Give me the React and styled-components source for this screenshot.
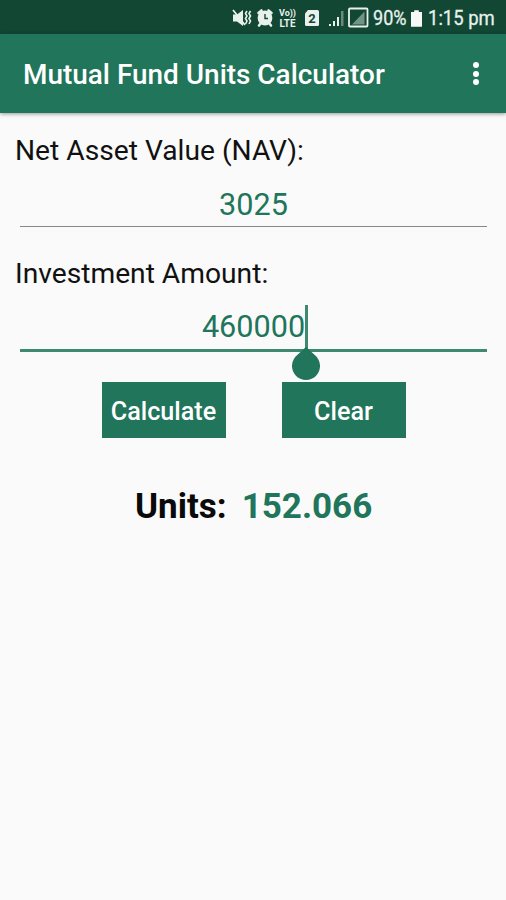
import React from 'react';
import styled, { createGlobalStyle } from 'styled-components';

const GlobalStyle = createGlobalStyle`
    * {
      box-sizing: border-box;
    }
    body {
      margin: 0;
      background: #fafafa;
      font-family: Roboto, sans-serif;
    }
`;

const Screen = styled.div`
    width: 506px;
    height: 900px;
    overflow: hidden;
    background: #fafafa;
`;

const StatusBar = styled.div`
    display: flex;
    align-items: center;
    height: 34px;
    padding: 2px 0 0 232px;
    background: #124734;
    color: #e9f1ee;
`;

const StatusIcons = styled.svg`
    display: block;
    flex: none;
    width: 141px;
    height: 32px;
`;

const StatusText = styled.span`
    flex: none;
    width: ${props => props.$width}px;
    font-size: 21px;
    line-height: 32px;
    white-space: nowrap;
    -webkit-text-stroke: 0.3px #e9f1ee;
    transform: scaleX(${props => props.$scale});
    transform-origin: left center;
`;

const Battery = styled.svg`
    display: block;
    flex: none;
    width: 11px;
    height: 17px;
    margin: 0 6px 0 4px;
`;

const AppBar = styled.header`
    display: flex;
    align-items: center;
    justify-content: space-between;
    height: 79px;
    padding: 2px 24px 0 23px;
    background: #20755a;
    box-shadow: 0 1px 4px rgba(0, 0, 0, 0.4);
`;

const Title = styled.h1`
    margin: 0;
    color: #fff;
    font-size: 27.95px;
    font-weight: 500;
    line-height: 36px;
    white-space: nowrap;
`;

const MenuButton = styled.button`
    display: flex;
    flex-direction: column;
    gap: 2.5px;
    margin-top: -2px;
    padding: 0 3px 0 0;
    border: 0;
    background: none;
`;

const Dot = styled.span`
    width: 6px;
    height: 6px;
    border-radius: 50%;
    background: #fff;
`;

const Form = styled.main`
    padding: 20px 15px 0;
`;

const Label = styled.div`
    height: 36px;
    color: #111;
    font-size: 28.2px;
    line-height: 36px;
    white-space: nowrap;
`;

const Field = styled.div`
    display: flex;
    justify-content: center;
    height: ${props => (props.$focused ? 60 : 58)}px;
    margin: 0 4px 0 5px;
    padding-top: ${props => (props.$focused ? 13 : 14)}px;
    border-bottom: ${props => (props.$focused ? '3px solid #3f8970' : '1.5px solid #888')};
    margin-bottom: ${props => (props.$focused ? 30 : 29)}px;
`;

const Value = styled.span`
    position: relative;
    height: 44px;
    color: #20755a;
    font-size: 30.6px;
    line-height: 44px;
`;

const Caret = styled.span`
    position: absolute;
    top: 0;
    right: -3px;
    width: 3px;
    height: 44px;
    background: #3f8970;
`;

const Handle = styled.svg`
    position: absolute;
    top: 42px;
    right: -15px;
    width: 28px;
    height: 33px;
`;

const Actions = styled.div`
    display: flex;
    gap: 56px;
    padding-left: 86.5px;
`;

const ActionButton = styled.button`
    width: 124px;
    height: 56px;
    padding: 4px 0 0;
    border: 0;
    background: #20755a;
    color: #fff;
    font-family: inherit;
    font-size: 25.2px;
    font-weight: 500;
    line-height: 32px;
`;

const Result = styled.div`
    display: flex;
    gap: 15px;
    padding: 46px 0 0 120px;
    font-size: 35px;
    font-weight: 700;
    line-height: 46px;
    white-space: nowrap;
`;

const ResultLabel = styled.span`
    color: #0a0a0a;
`;

const ResultValue = styled.span`
    color: #20755a;
`;

const SystemIcons = () => (
  <StatusIcons viewBox="232 2 141 32" fill="#e9f1ee">
    {/* muted, vibrating */}
    <path d="M233 14.5h4l6-4.500v16l-6-4.500h-4z" />
    <path d="M233 10l12 15" fill="none" stroke="#e9f1ee" strokeWidth="1.8" />
    <path d="M247 11l-1.500 2.500 1.500 2.500-1.500 2.500 1.500 2.500-1.500 3M250.500 11l-1.500 2.500 1.500 2.500-1.500 2.500 1.500 2.500-1.500 3" fill="none" stroke="#e9f1ee" strokeWidth="1.6" />
    {/* alarm */}
    <circle cx="265" cy="18" r="7.4" />
    <path d="M258.500 13l3-2.500M268.500 10.500l3 2.500M261 23l-2 2.500M269 23l2 2.500" stroke="#e9f1ee" strokeWidth="2.6" strokeLinecap="round" />
    <path d="M265 14v4.500h3" fill="none" stroke="#124734" strokeWidth="1.4" />
    <text x="279" y="16" fontSize="8.5" fontWeight="700" textLength="17" lengthAdjust="spacingAndGlyphs">Vo))</text>
    <text x="279.5" y="26.5" fontSize="10.5" fontWeight="700" textLength="16" lengthAdjust="spacingAndGlyphs">LTE</text>
    {/* second sim card */}
    <path d="M308 10h9.500a1.500 1.500 0 0 1 1.500 1.500v13a1.500 1.500 0 0 1-1.500 1.500h-11a1.500 1.500 0 0 1-1.500-1.500v-11z" />
    <text x="312" y="22.5" fill="#124734" fontSize="13" fontWeight="700" textAnchor="middle">2</text>
    {/* signal strength */}
    <path d="M329 24h2v2h-2zM333 21h2v5h-2zM337 17h2v9h-2z" />
    <path d="M341 11h2.500v15h-2.500z" opacity=".4" />
    <rect x="349" y="8.5" width="18.500" height="18" rx="1" fill="none" stroke="#e9f1ee" strokeWidth="1.8" />
    <path d="M352 24.500L364.500 11.500v13z" opacity=".45" />
  </StatusIcons>
);

const App = () => {
  return (
    <>
      <GlobalStyle />
      <Screen>
        <StatusBar>
          <SystemIcons />
          <StatusText $width={34} $scale={0.86}>90%</StatusText>
          <Battery viewBox="0 0 12 18" fill="#f5f8f7">
            <path d="M3.500 0h5v2H12v16H0V2h3.500z" />
          </Battery>
          <StatusText $width={67} $scale={0.88}>1:15 pm</StatusText>
        </StatusBar>
        <AppBar>
          <Title>Mutual Fund Units Calculator</Title>
          <MenuButton aria-label="More options">
            <Dot />
            <Dot />
            <Dot />
          </MenuButton>
        </AppBar>
        <Form>
          <Label>Net Asset Value (NAV):</Label>
          <Field>
            <Value>3025</Value>
          </Field>
          <Label>Investment Amount:</Label>
          <Field $focused>
            <Value>
              460000
              <Caret />
              <Handle viewBox="0 0 28 33" fill="#20755a">
                <path d="M14 0l8.500 7.800A14 14 0 1 1 5.500 7.800z" />
              </Handle>
            </Value>
          </Field>
          <Actions>
            <ActionButton>Calculate</ActionButton>
            <ActionButton>Clear</ActionButton>
          </Actions>
          <Result>
            <ResultLabel>Units:</ResultLabel>
            <ResultValue>152.066</ResultValue>
          </Result>
        </Form>
      </Screen>
    </>
  );
};

export default App;
